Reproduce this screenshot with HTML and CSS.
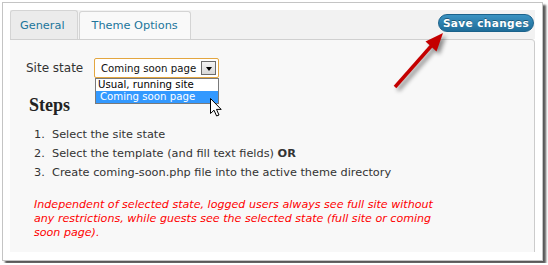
FILE: index.html
```html
<!DOCTYPE html>
<html lang="en">
<head>
    <meta charset="UTF-8">
    <title>Theme Options</title>
    <link rel="stylesheet" href="styles.css">
</head>
<body>
<div class="frame">
    <div class="tab-bar">
        <div class="tabs">
            <div class="tab tab-general">General</div>
            <div class="tab tab-active">Theme Options</div>
        </div>
        <button class="save-btn">Save changes</button>
    </div>
    <div class="panel">
        <div class="field-row">
            <span class="field-label">Site state</span>
            <div class="select">
                <span class="select-value">Coming soon page</span>
                <span class="select-arrow"><span class="caret"></span></span>
                <div class="select-list">
                    <div class="option">Usual, running site</div>
                    <div class="option option-selected">Coming soon page</div>
                </div>
                <svg class="cursor" width="13" height="19" viewBox="0 0 13 19">
                    <path d="M0.5 0.5 L0.5 15.5 L4 12.2 L6.6 18 L9 17 L6.5 11.4 L11.2 11.4 Z" fill="#fff" stroke="#000" stroke-width="1"/>
                </svg>
            </div>
        </div>
        <h3 class="steps-title">Steps</h3>
        <ol class="steps">
            <li><span class="num">1.</span>Select the site state</li>
            <li><span class="num">2.</span>Select the template (and fill text fields)&nbsp;<b>OR</b></li>
            <li><span class="num">3.</span>Create coming-soon.php file into the active theme directory</li>
        </ol>
        <p class="note">Independent of selected state, logged users always see full site without any restrictions, while guests see the selected state (full site or coming soon page).</p>
    </div>
    <svg class="arrow" width="80" height="75" viewBox="0 0 80 75">
        <line x1="15" y1="62" x2="53" y2="19" stroke="#c40000" stroke-width="3.5"/>
        <polygon points="63,8 45.5,16.5 56.5,26.5" fill="#c40000"/>
    </svg>
</div>
</body>
</html>
```

FILE: styles.css
```css
body{
    margin: 0;
    background: #ffffff;
    font-family: "DejaVu Sans", Verdana, sans-serif;
}
.frame{
    position: relative;
    width: 541px;
    height: 259px;
    margin: 2px;
    box-sizing: border-box;
    border: 1px solid #c4c4c4;
    padding: 7px 7px 8px 7px;
    background: #ffffff;
    box-shadow: 3px 3px 2px rgba(0,0,0,0.65);
    display: flex;
    flex-direction: column;
}
.tab-bar{
    height: 29px;
    display: flex;
    justify-content: space-between;
    align-items: flex-start;
    background: #f2f2f2;
}
.tabs{
    display: flex;
    align-items: flex-end;
    height: 29px;
}
.tab{
    box-sizing: border-box;
    border: 1px solid #d4d4d4;
    border-bottom: none;
    border-radius: 3px 3px 0 0;
    font-size: 11.3px;
    color: #21759b;
    display: flex;
    align-items: center;
}
.tab-general{
    height: 29px;
    padding: 1px 12px 0 9px;
    background: #ebebeb;
}
.tab-active{
    height: 28px;
    margin-left: 1px;
    padding: 0 12px;
    background: #f9f9f9;
}
.save-btn{
    width: 96px;
    height: 18px;
    margin: 4px 1px 0 0;
    padding: 0;
    border: 1px solid #1b628b;
    border-radius: 10px;
    background: linear-gradient(#3b93c2, #1f6d99);
    color: #ffffff;
    font-family: "DejaVu Sans", Verdana, sans-serif;
    font-size: 10.5px;
    font-weight: bold;
    letter-spacing: 0.4px;
    text-shadow: 0 -1px 0 rgba(0,0,0,0.35);
}
.panel{
    flex: 1;
    background: #f8f8f8;
    border-top: 1px solid #d0d0d0;
    border-right: 1px solid #cccccc;
    border-top-right-radius: 4px;
    padding: 18px 0 0 16px;
    color: #333333;
}
.field-row{
    display: flex;
    align-items: center;
    height: 20px;
}
.field-label{
    font-size: 12px;
    width: 68px;
}
.select{
    position: relative;
    box-sizing: border-box;
    width: 125px;
    height: 20px;
    border: 1px solid #e3a640;
    border-radius: 2px;
    background: #ffffff;
    display: flex;
    align-items: center;
    justify-content: space-between;
    padding: 0 2px 0 6px;
}
.select-value{
    font-size: 10.2px;
    color: #111111;
}
.select-arrow{
    box-sizing: border-box;
    width: 15px;
    height: 14px;
    border: 1px solid #6b6b6b;
    background: linear-gradient(#f4f4f4, #d8d8d8);
    display: flex;
    align-items: center;
    justify-content: center;
}
.caret{
    width: 0;
    height: 0;
    border-left: 3px solid transparent;
    border-right: 3px solid transparent;
    border-top: 4px solid #000000;
    margin-top: 1px;
}
.select-list{
    position: absolute;
    top: 19px;
    left: 0;
    box-sizing: border-box;
    width: 124px;
    border: 1px solid #7a7a7a;
    background: #ffffff;
    font-size: 10.2px;
    color: #000000;
}
.option{
    height: 12px;
    line-height: 12px;
    padding-left: 2px;
}
.option-selected{
    background: #3399ff;
    color: #ffffff;
    padding-left: 4px;
}
.cursor{
    position: absolute;
    left: 115px;
    top: 39px;
}
.steps-title{
    font-family: "Liberation Serif", "Times New Roman", serif;
    font-size: 18px;
    line-height: 20px;
    font-weight: bold;
    color: #222222;
    margin: 17px 0 0 3px;
}
.steps{
    list-style: none;
    margin: 10px 0 0 8px;
    padding: 0;
    font-size: 11.3px;
    line-height: 19px;
}
.steps li{
    display: flex;
}
.steps .num{
    width: 18px;
}
.note{
    width: 400px;
    margin: 16px 0 0 8px;
    font-size: 11.1px;
    line-height: 14px;
    font-style: italic;
    color: #ff0000;
}
.arrow{
    position: absolute;
    left: 377px;
    top: 22px;
    filter: drop-shadow(3px 3px 2px rgba(0,0,0,0.45));
}
```
